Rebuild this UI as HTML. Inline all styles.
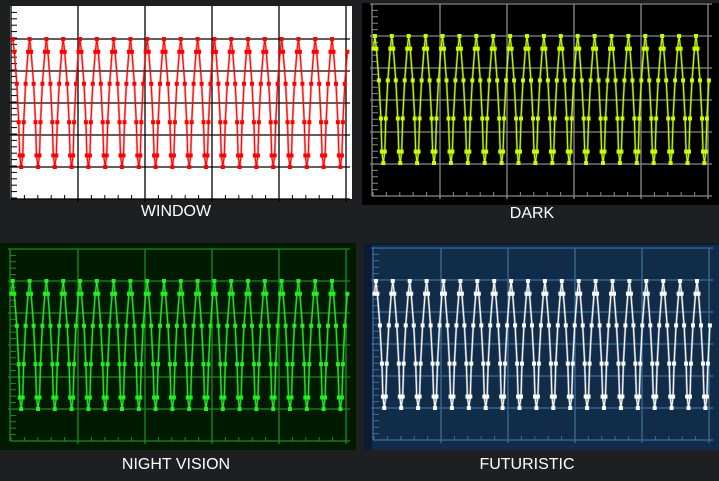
<!DOCTYPE html><html><head><meta charset="utf-8"><style>
html,body{margin:0;padding:0;background:#1e1f21;width:719px;height:481px;overflow:hidden}
svg{position:absolute;left:0;top:0}
.l{position:absolute;color:#fff;font:16px "Liberation Sans",sans-serif;transform:translateX(-50%);white-space:nowrap}
</style></head><body>
<svg id="s" width="719" height="481" xmlns="http://www.w3.org/2000/svg">
<rect x="0" y="0" width="719" height="481" fill="#1e1f21"/>
<rect x="10" y="6" width="342" height="193" fill="#fff"/>
<rect x="362" y="3" width="357" height="202" fill="#000"/>
<rect x="0" y="243" width="356" height="207" fill="#001a00"/>
<rect x="364" y="243" width="355" height="207" fill="#0b1a35"/>
<rect x="372" y="245" width="347" height="205" fill="#112c48"/>
<g id="g"></g>
</svg>
<div class="l" style="left:176px;top:203px">WINDOW</div>
<div class="l" style="left:532px;top:205px">DARK</div>
<div class="l" style="left:176px;top:456px">NIGHT VISION</div>
<div class="l" style="left:527px;top:456px">FUTURISTIC</div>
<script>
var g=document.getElementById('g'),h='';
function P(o){
 var gc=o.gc;
 for(var i=0;i<o.gy.length;i++)h+='<line x1="'+(o.ax-2)+'" y1="'+o.gy[i]+'" x2="'+o.r+'" y2="'+o.gy[i]+'" stroke="'+gc+'" stroke-width="1.3"/>';
 for(var i=0;i<o.gx.length;i++)h+='<line x1="'+o.gx[i]+'" y1="'+o.t+'" x2="'+o.gx[i]+'" y2="'+(o.b+3)+'" stroke="'+gc+'" stroke-width="1.3"/>';
 h+='<line x1="'+o.ax+'" y1="'+o.t+'" x2="'+o.ax+'" y2="'+o.b+'" stroke="'+gc+'" stroke-width="1.3"/>';
 h+='<line x1="'+o.ax+'" y1="'+o.b+'" x2="'+o.r+'" y2="'+o.b+'" stroke="'+gc+'" stroke-width="1.3"/>';
 var st=(o.gy[1]-o.gy[0])/5;
 for(var y=o.t+st;y<o.b;y+=st)h+='<line x1="'+o.ax+'" y1="'+y.toFixed(1)+'" x2="'+(o.ax+6)+'" y2="'+y.toFixed(1)+'" stroke="'+gc+'" stroke-width="1"/>';
 var sx=(o.gx[1]-o.gx[0])/5;
 for(var x=o.gx[0]-sx*5;x<o.r;x+=sx)if(x>o.ax)h+='<line x1="'+x.toFixed(1)+'" y1="'+o.b+'" x2="'+x.toFixed(1)+'" y2="'+(o.b-4)+'" stroke="'+gc+'" stroke-width="1"/>';
 var T=o.wt,R=o.wb-o.wt,f=[[0,0],[1.5,.1],[4,.35],[6,.65],[7,.91],[8.5,1],[10,.91],[11,.65],[13,.35],[15.5,.1]];
 var pts=[],m='';
 for(var p=o.p0-17;p<o.r;p+=o.per){
  for(var k=0;k<f.length;k++){var x=p+f[k][0]*o.per/17,y=T+R*f[k][1];if(x>=o.ax+1&&x<=o.r-2){pts.push(x.toFixed(1)+','+y.toFixed(1));m+='<rect x="'+(x-2).toFixed(1)+'" y="'+(y-2).toFixed(1)+'" width="4" height="4" fill="'+o.c+'"/>';}}
 }
 h+='<polyline points="'+pts.join(' ')+'" fill="none" stroke="'+o.c+'" stroke-width="2.2" stroke-opacity=".45"/>';
 h+='<polyline points="'+pts.join(' ')+'" fill="none" stroke="'+o.c+'" stroke-width="1"/>';
 h+=m;
}
P({ax:11,t:6,b:199,r:350,gy:[39,71,103,135,167],gx:[78,145,212,279,346],gc:'#000',wt:39,wb:167,p0:13,per:16.8,c:'#ff0000'});
P({ax:372,t:4,b:196,r:712,gy:[4,36,68,100,132,164],gx:[440,507,574,641,708],gc:'#8a8a8a',wt:36,wb:163,p0:375,per:16.9,c:'#c8ff00'});
P({ax:10,t:249,b:441,r:350,gy:[249,281,313,345,377,409],gx:[78,145,212,279,346],gc:'#1f8a1f',wt:281,wb:409,p0:13,per:16.8,c:'#22ee22'});
P({ax:373,t:248,b:440,r:713,gy:[248,280,312,344,376,408],gx:[441,508,575,642,709],gc:'#3d6e96',wt:281,wb:408,p0:376,per:16.9,c:'#ffffff'});
g.innerHTML=h;
</script>
</body></html>
